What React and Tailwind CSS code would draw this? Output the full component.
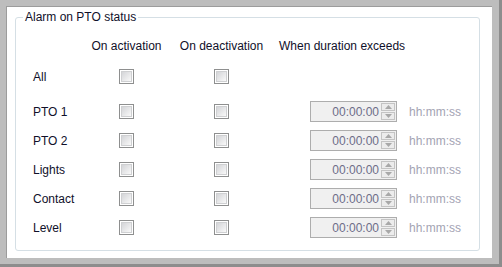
import React from "react";

function Check() {
  return (
    <div className="w-[15px] h-[15px] border border-[#8e8f8f] bg-white p-[1px]">
      <div className="w-full h-full border border-[#cfd0d2] bg-linear-to-br from-[#d4d5d8] to-[#f9f9f9]" />
    </div>
  );
}

function Spin() {
  return (
    <div className="flex items-center gap-[12px]">
      <div className="w-[87px] h-[21px] border border-[#adadad] bg-[#f0f0f0] flex items-center">
        <span className="flex-1 text-right pr-[2px] text-[#6d6d88]">00:00:00</span>
        <div className="w-[14px] h-[17px] mr-[1px] flex flex-col gap-[1px]">
          <div className="flex-1 border border-[#c4c4c4] bg-[#ececec] flex items-center justify-center">
            <svg width="7" height="4" viewBox="0 0 7 4"><path d="M0 4 L3.5 0 L7 4 Z" fill="#a8a8a8" /></svg>
          </div>
          <div className="flex-1 border border-[#c4c4c4] bg-[#ececec] flex items-center justify-center">
            <svg width="7" height="4" viewBox="0 0 7 4"><path d="M0 0 L3.5 4 L7 0 Z" fill="#a8a8a8" /></svg>
          </div>
        </div>
      </div>
      <span className="text-[#a3a3b3]">hh:mm:ss</span>
    </div>
  );
}

function Row({ label, spin }) {
  return (
    <div className="flex items-center h-[21px]">
      <div className="w-[58px]">{label}</div>
      <div className="w-[71px] flex justify-center"><Check /></div>
      <div className="w-[85px] ml-[17px] flex justify-center"><Check /></div>
      <div className="ml-[46px]">{spin ? <Spin /> : null}</div>
    </div>
  );
}

export default function App() {
  return (
    <div
      className="w-[502px] h-[267px] bg-[#bdbdbd] border-r-[3px] border-b-[3px] border-[#8d8d8d] pt-[6px] pl-[6px] pr-[7px] pb-[6px] flex text-[12px] text-[#10102a]"
      style={{ fontFamily: '"Liberation Sans", Arial, sans-serif' }}
    >
      <div className="flex-1 flex bg-white border-t border-l border-[#9c9c9c] pt-[10px] pl-[8px] pr-[12px] pb-[7px]">
        <div className="relative flex-1 border border-[#d5dfe5] rounded-[3px] pl-[17px]">
          <div className="absolute -top-[8px] left-[7px] bg-white px-[2px] leading-[14px]">Alarm on PTO status</div>
          <div className="flex items-center h-[20px] mt-[18px]">
            <div className="w-[58px]" />
            <div className="w-[71px] text-center whitespace-nowrap">On activation</div>
            <div className="w-[85px] ml-[17px] text-center whitespace-nowrap">On deactivation</div>
            <div className="ml-[15px] whitespace-nowrap">When duration exceeds</div>
          </div>
          <div className="mt-[10px]">
            <Row label="All" />
          </div>
          <div className="mt-[14px] flex flex-col gap-[8px]">
            <Row label="PTO 1" spin />
            <Row label="PTO 2" spin />
            <Row label="Lights" spin />
            <Row label="Contact" spin />
            <Row label="Level" spin />
          </div>
        </div>
      </div>
    </div>
  );
}
